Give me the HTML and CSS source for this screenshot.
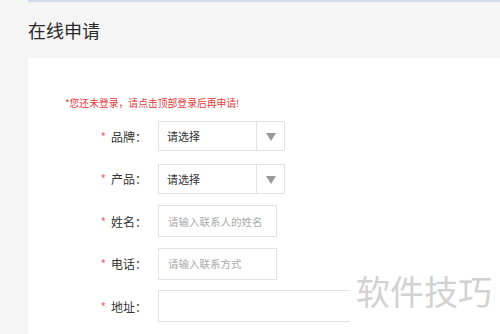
FILE: index.html
```html
<!DOCTYPE html>
<html lang="zh-CN">
<head>
  <meta charset="UTF-8">
  <title>在线申请</title>
  <link rel="stylesheet" href="styles.css">
</head>
<body>
  <div class="page">
    <h2 class="title">在线申请</h2>
    <div class="card">
      <p class="notice">*您还未登录，请点击顶部登录后再申请!</p>
      <div class="row">
        <label class="label"><span class="star">*</span>品牌：</label>
        <div class="select">
          <span class="select-text">请选择</span>
          <span class="select-arrow"></span>
        </div>
      </div>
      <div class="row">
        <label class="label"><span class="star">*</span>产品：</label>
        <div class="select">
          <span class="select-text">请选择</span>
          <span class="select-arrow"></span>
        </div>
      </div>
      <div class="row">
        <label class="label"><span class="star">*</span>姓名：</label>
        <input class="input" type="text" placeholder="请输入联系人的姓名">
      </div>
      <div class="row">
        <label class="label"><span class="star">*</span>电话：</label>
        <input class="input" type="text" placeholder="请输入联系方式">
      </div>
      <div class="row">
        <label class="label"><span class="star">*</span>地址：</label>
        <input class="input input-wide" type="text">
      </div>
    </div>
  </div>
  <div class="watermark">软件技巧</div>
</body>
</html>
```

FILE: styles.css
```css
html, body {
  margin: 0;
  height: 100%;
  overflow: hidden;
}
body {
  background: #f5f5f5;
  font-family: "Noto Sans CJK SC", "Noto Sans", sans-serif;
  color: #333;
  position: relative;
}
.page {
  margin-left: 28px;
  border-top: 2px solid #d3dbee;
  height: 100%;
  display: flex;
  flex-direction: column;
}
.title {
  margin: 0;
  height: 56px;
  line-height: 56px;
  font-size: 18px;
  font-weight: normal;
  color: #2a2a2a;
}
.card {
  flex: 1;
  background: #fff;
  padding: 38px 0 0 37px;
}
.notice {
  margin: 0 0 10px;
  font-size: 9.8px;
  line-height: 14px;
  color: #e4393c;
}
.row {
  display: flex;
  align-items: center;
  height: 32px;
  margin-bottom: 10.5px;
}
.label {
  width: 82px;
  padding-right: 11px;
  text-align: right;
  font-size: 12px;
  color: #333;
}
.star {
  color: #f0696c;
  margin-right: 5px;
}
.select {
  width: 125px;
  height: 28px;
  border: 1px solid #e2e2e2;
  display: flex;
  align-items: center;
  font-size: 11px;
}
.select-text {
  flex: 1;
  padding-left: 8px;
  color: #333;
}
.select-arrow {
  width: 27px;
  height: 100%;
  border-left: 1px solid #e2e2e2;
  position: relative;
}
.select-arrow::after {
  content: "";
  position: absolute;
  left: 9px;
  top: 11px;
  border-left: 5px solid transparent;
  border-right: 5px solid transparent;
  border-top: 8px solid #999;
}
.input {
  box-sizing: border-box;
  width: 119px;
  height: 32px;
  border: 1px solid #e2e2e2;
  padding: 0 9px;
  font-family: inherit;
  font-size: 10.5px;
  outline: none;
}
.input::placeholder {
  color: #aaa;
}
.input-wide {
  width: 240px;
}
.watermark {
  position: absolute;
  left: 350px;
  top: 269px;
  width: 150px;
  height: 65px;
  padding-left: 6px;
  box-sizing: border-box;
  background: #fff;
  font-size: 34px;
  line-height: 44px;
  color: #d2d2d2;
}
```
